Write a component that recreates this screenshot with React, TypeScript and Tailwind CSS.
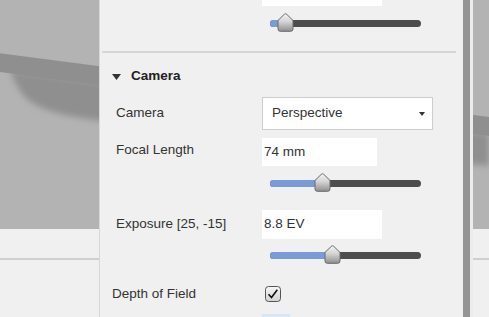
import React from "react";

const font = { fontFamily: '"Liberation Sans", Arial, sans-serif' };

function Thumb() {
  return (
    <svg width="17" height="19" viewBox="0 0 17 19" className="block">
      <defs>
        <linearGradient id="tg" x1="0" y1="0" x2="0" y2="1">
          <stop offset="0" stopColor="#f4f4f4" />
          <stop offset="0.45" stopColor="#d4d4d4" />
          <stop offset="1" stopColor="#8e8e8e" />
        </linearGradient>
      </defs>
      <path
        d="M8.5 0.8 Q9.2 0.8 10 1.6 L16 7.4 L16 16 Q16 18.3 13.7 18.3 L3.3 18.3 Q1 18.3 1 16 L1 7.4 L7 1.6 Q7.8 0.8 8.5 0.8 Z"
        fill="url(#tg)"
        stroke="#6a6a6a"
        strokeWidth="1"
      />
    </svg>
  );
}

function Slider({ pos }: { pos: number }) {
  return (
    <div className="relative w-[151px] h-[20px]">
      <div className="absolute left-0 right-0 top-[6.5px] h-[7px] rounded-full bg-[#4d4d4d]" />
      <div
        className="absolute left-0 top-[6.5px] h-[7px] rounded-l-full bg-[#7b9bd8]"
        style={{ width: pos }}
      />
      <div className="absolute top-[0px]" style={{ left: pos - 8.5 }}>
        <Thumb />
      </div>
    </div>
  );
}

function Viewport() {
  return (
    <svg width="489" height="229" viewBox="0 0 489 229" className="block">
      <defs>
        <filter id="bl" x="-20%" y="-50%" width="140%" height="200%">
          <feGaussianBlur stdDeviation="3" />
        </filter>
      </defs>
      <rect width="489" height="229" fill="#b3b3b3" />
      <path
        d="M10 70 L489 134 L489 166 L99 120.5 C62 116 40 110 26 98 C18 90 14 80 10 70 Z"
        fill="#8f8f8f"
        filter="url(#bl)"
      />
      <path d="M0 53.3 L489 117 L489 136 L0 72 Z" fill="#8f8f8f" />
    </svg>
  );
}

export default function App() {
  return (
    <div
      className="relative w-[489px] h-[317px] overflow-hidden bg-[#f0f0f0] text-[13.5px] text-[#333]"
      style={font}
    >
      <Viewport />
      <div className="h-[29px] bg-[#f0f0f0]" />
      <div className="h-[2px] bg-[#cfcfcf]" />

      <div className="absolute top-0 left-[99px] h-[317px] flex">
        <div className="w-[364px] h-full bg-[#f0f0f0] border-l border-[#d8d8d8] overflow-hidden">
          <div className="h-[6px] pl-[162px]">
            <div className="w-[120px] h-full bg-white" />
          </div>
          <div className="mt-[7px] ml-[170px]">
            <Slider pos={15} />
          </div>
          <div className="mt-[18px] ml-[2px] w-[354px] h-[2px] bg-[#d6d6d6]" />

          <div className="mt-[13px] h-[20px] flex items-center pl-[12px]">
            <svg width="9" height="6" viewBox="0 0 9 6" className="block mt-[2px]">
              <path d="M0 0 L9 0 L4.5 6 Z" fill="#333" />
            </svg>
            <span className="ml-[10px] font-bold text-[#222]">Camera</span>
          </div>

          <div className="mt-[11px] h-[33px] flex items-center">
            <div className="w-[162px] pl-[16px]">Camera</div>
            <div className="w-[171px] h-full bg-white border border-[#cdcdcd] flex items-center pl-[9px] pr-[7px]">
              <span className="flex-1">Perspective</span>
              <svg width="6" height="4" viewBox="0 0 6 4" className="block">
                <path d="M0 0 L6 0 L3 4 Z" fill="#333" />
              </svg>
            </div>
          </div>

          <div className="mt-[8px] h-[28px] flex items-center">
            <div className="w-[162px] pl-[16px] pb-[3px]">Focal Length</div>
            <div className="w-[115px] h-full bg-white flex items-center pl-[2px] pt-[1px]">74 mm</div>
          </div>

          <div className="mt-[7px] ml-[170px]">
            <Slider pos={52} />
          </div>

          <div className="mt-[17px] h-[29px] flex items-center">
            <div className="w-[162px] pl-[16px]">Exposure [25, -15]</div>
            <div className="w-[120px] h-full bg-white flex items-center pl-[2px]">8.8 EV</div>
          </div>

          <div className="mt-[6px] ml-[170px]">
            <Slider pos={62} />
          </div>

          <div className="mt-[21px] h-[16px] flex items-center">
            <div className="w-[165px] pl-[12px]">Depth of Field</div>
            <svg width="16" height="16" viewBox="0 0 16 16" className="block">
              <defs>
                <linearGradient id="cg" x1="0" y1="0" x2="0" y2="1">
                  <stop offset="0" stopColor="#f6f6f6" />
                  <stop offset="1" stopColor="#d2d2d2" />
                </linearGradient>
              </defs>
              <rect x="0.5" y="0.5" width="15" height="15" rx="3" fill="url(#cg)" stroke="#555" />
              <path d="M3.5 8.3 L6.5 11.5 L12.3 3.8" fill="none" stroke="#111" strokeWidth="1.6" />
            </svg>
          </div>

          <div className="mt-[12px] ml-[162px] w-[28px] h-[10px] bg-[#d4e7f7]" />
        </div>
        <div className="w-[7px] h-full bg-[#959595]" />
        <div className="w-[3px] h-full bg-[#ececec]" />
      </div>
    </div>
  );
}
